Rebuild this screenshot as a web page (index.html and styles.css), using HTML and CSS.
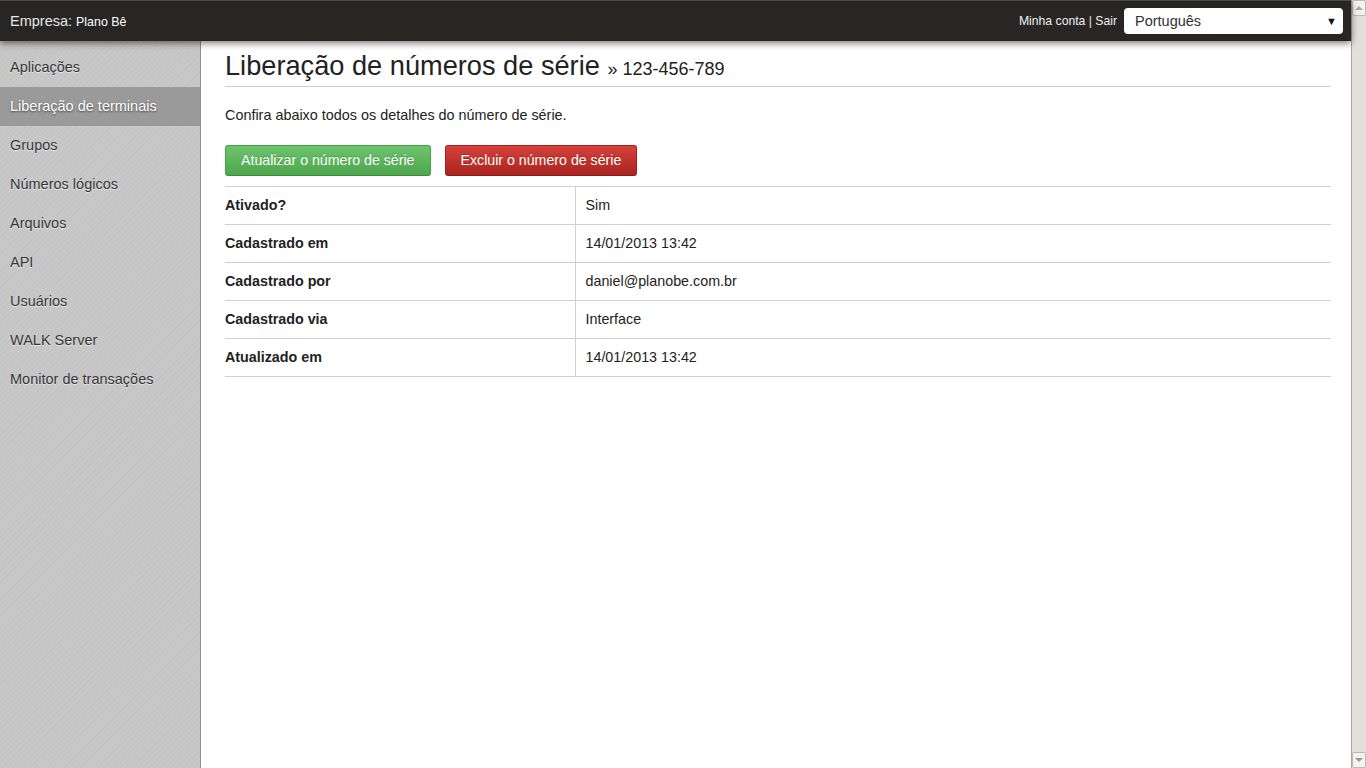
FILE: index.html
```html
<!DOCTYPE html>
<html lang="pt-BR">
<head>
<meta charset="utf-8">
<title>Liberação de números de série</title>
<link rel="stylesheet" href="styles.css">
</head>
<body>
<div class="page">
  <div class="app">
    <header class="topbar">
      <div class="company">Empresa: <span class="company-name">Plano Bê</span></div>
      <div class="account">
        <span class="links"><a href="#">Minha conta</a> | <a href="#">Sair</a></span>
        <div class="lang-select"><span>Português</span><span class="caret">▼</span></div>
      </div>
    </header>
    <div class="body">
      <nav class="sidebar">
        <a class="nav-item" href="#">Aplicações</a>
        <a class="nav-item active" href="#">Liberação de terminais</a>
        <a class="nav-item" href="#">Grupos</a>
        <a class="nav-item" href="#">Números lógicos</a>
        <a class="nav-item" href="#">Arquivos</a>
        <a class="nav-item" href="#">API</a>
        <a class="nav-item" href="#">Usuários</a>
        <a class="nav-item" href="#">WALK Server</a>
        <a class="nav-item" href="#">Monitor de transações</a>
      </nav>
      <main class="content">
        <h1 class="title">Liberação de números de série <small>» 123-456-789</small></h1>
        <p class="intro">Confira abaixo todos os detalhes do número de série.</p>
        <div class="actions">
          <a class="btn btn-success" href="#">Atualizar o número de série</a>
          <a class="btn btn-danger" href="#">Excluir o número de série</a>
        </div>
        <table class="details">
          <tr><th>Ativado?</th><td>Sim</td></tr>
          <tr><th>Cadastrado em</th><td>14/01/2013 13:42</td></tr>
          <tr><th>Cadastrado por</th><td>daniel@planobe.com.br</td></tr>
          <tr><th>Cadastrado via</th><td>Interface</td></tr>
          <tr><th>Atualizado em</th><td>14/01/2013 13:42</td></tr>
        </table>
      </main>
    </div>
  </div>
  <div class="scrollbar">
    <div class="sb-btn sb-up"></div>
    <div class="sb-track"></div>
    <div class="sb-btn sb-down"></div>
  </div>
</div>
</body>
</html>
```

FILE: styles.css
```css
* { box-sizing: border-box; }
html, body { margin: 0; padding: 0; height: 100%; }
body {
  font-family: "Liberation Sans", Arial, sans-serif;
  color: #333;
  background: #fff;
  overflow: hidden;
}
a { text-decoration: none; color: inherit; }

.page { display: flex; height: 768px; }
.app { flex: 1; display: flex; flex-direction: column; min-width: 0; }

.topbar {
  position: relative;
  z-index: 2;
  height: 41px;
  flex: none;
  background: #272625;
  border-top: 1px solid #4a4a4a;
  box-shadow: 0 2px 7px rgba(0,0,0,0.55);
  display: flex;
  align-items: center;
  justify-content: space-between;
  padding: 0 8px 0 10px;
}
.company { color: #e6e6e6; font-size: 14.5px; }
.company-name { color: #fff; font-size: 12.4px; }
.account { display: flex; align-items: center; gap: 7px; }
.links { color: #e0e0e0; font-size: 12.2px; }
.links a { color: #eee; }
.lang-select {
  width: 219px;
  height: 26px;
  background: #fff;
  border-radius: 4px;
  display: flex;
  align-items: center;
  justify-content: space-between;
  padding: 0 6px 0 11px;
  font-size: 14.5px;
  color: #333;
}
.caret { font-size: 11px; color: #111; }

.body { flex: 1; display: flex; min-height: 0; }
.sidebar {
  width: 201px;
  flex: none;
  background-color: #c7c7c7;
  background-image:
    repeating-linear-gradient(45deg, rgba(255,255,255,0.025) 0 1px, transparent 1px 3px),
    repeating-linear-gradient(-45deg, rgba(0,0,0,0.02) 0 1px, transparent 1px 4px);
  border-right: 1px solid #8f8f8f;
  padding-top: 7px;
  display: flex;
  flex-direction: column;
}
.nav-item {
  display: block;
  height: 39px;
  line-height: 39px;
  padding-left: 10px;
  font-size: 14.5px;
  color: #383838;
  text-shadow: 0 1px 1px rgba(255,255,255,0.6);
}
.nav-item.active {
  background: #9a9a9a;
  color: #fff;
  text-shadow: 0 1px 2px rgba(0,0,0,0.55);
}

.content { flex: 1; padding: 7px 20px 0 24px; min-width: 0; }
.title {
  margin: 0;
  font-weight: normal;
  font-size: 27.2px;
  line-height: 36px;
  color: #222;
  padding-bottom: 2px;
  border-bottom: 1px solid #cfcfcf;
  box-sizing: content-box;
  height: 36px;
}
.title small { font-size: 18px; line-height: 1; color: #222; }
.intro { margin: 18px 0 0; font-size: 14.4px; line-height: 20px; color: #222; }

.actions { margin-top: 20px; display: flex; gap: 14px; }
.btn {
  display: inline-block;
  font-size: 14.2px;
  line-height: 19px;
  padding: 5px 15px;
  border: 1px solid;
  border-radius: 3px;
  color: #fff;
  text-shadow: 0 -1px 0 rgba(0,0,0,0.2);
}
.btn-success {
  background: linear-gradient(#6cc56c, #4da64d);
  border-color: #46a046 #46a046 #3d8b3d;
}
.btn-danger {
  background: linear-gradient(#d6413a, #a9241f);
  border-color: #a3221d #a3221d #8e1c18;
}

.details {
  margin-top: 10px;
  width: 100%;
  border-collapse: collapse;
  font-size: 14.3px;
}
.details th, .details td {
  border-top: 1px solid #d0d0d0;
  border-bottom: 1px solid #d0d0d0;
  padding: 8px 0;
  line-height: 21px;
  text-align: left;
  color: #222;
}
.details th { width: 350px; font-weight: bold; }
.details td { border-left: 1px solid #d0d0d0; padding-left: 10px; }

.scrollbar {
  width: 15px;
  flex: none;
  display: flex;
  flex-direction: column;
  background: #e3dfdb;
  border-left: 1px solid #aaa6a2;
}
.sb-btn {
  height: 16px;
  flex: none;
  background: #f4f2ef;
  border: 1px solid #bdb9b5;
  border-radius: 2px;
  display: flex;
  align-items: center;
  justify-content: center;
}
.sb-btn::after {
  content: "";
  border-left: 4px solid transparent;
  border-right: 4px solid transparent;
}
.sb-up::after { border-bottom: 4px solid #aaa; }
.sb-down::after { border-top: 4px solid #999; }
.sb-track { flex: 1; }
```
